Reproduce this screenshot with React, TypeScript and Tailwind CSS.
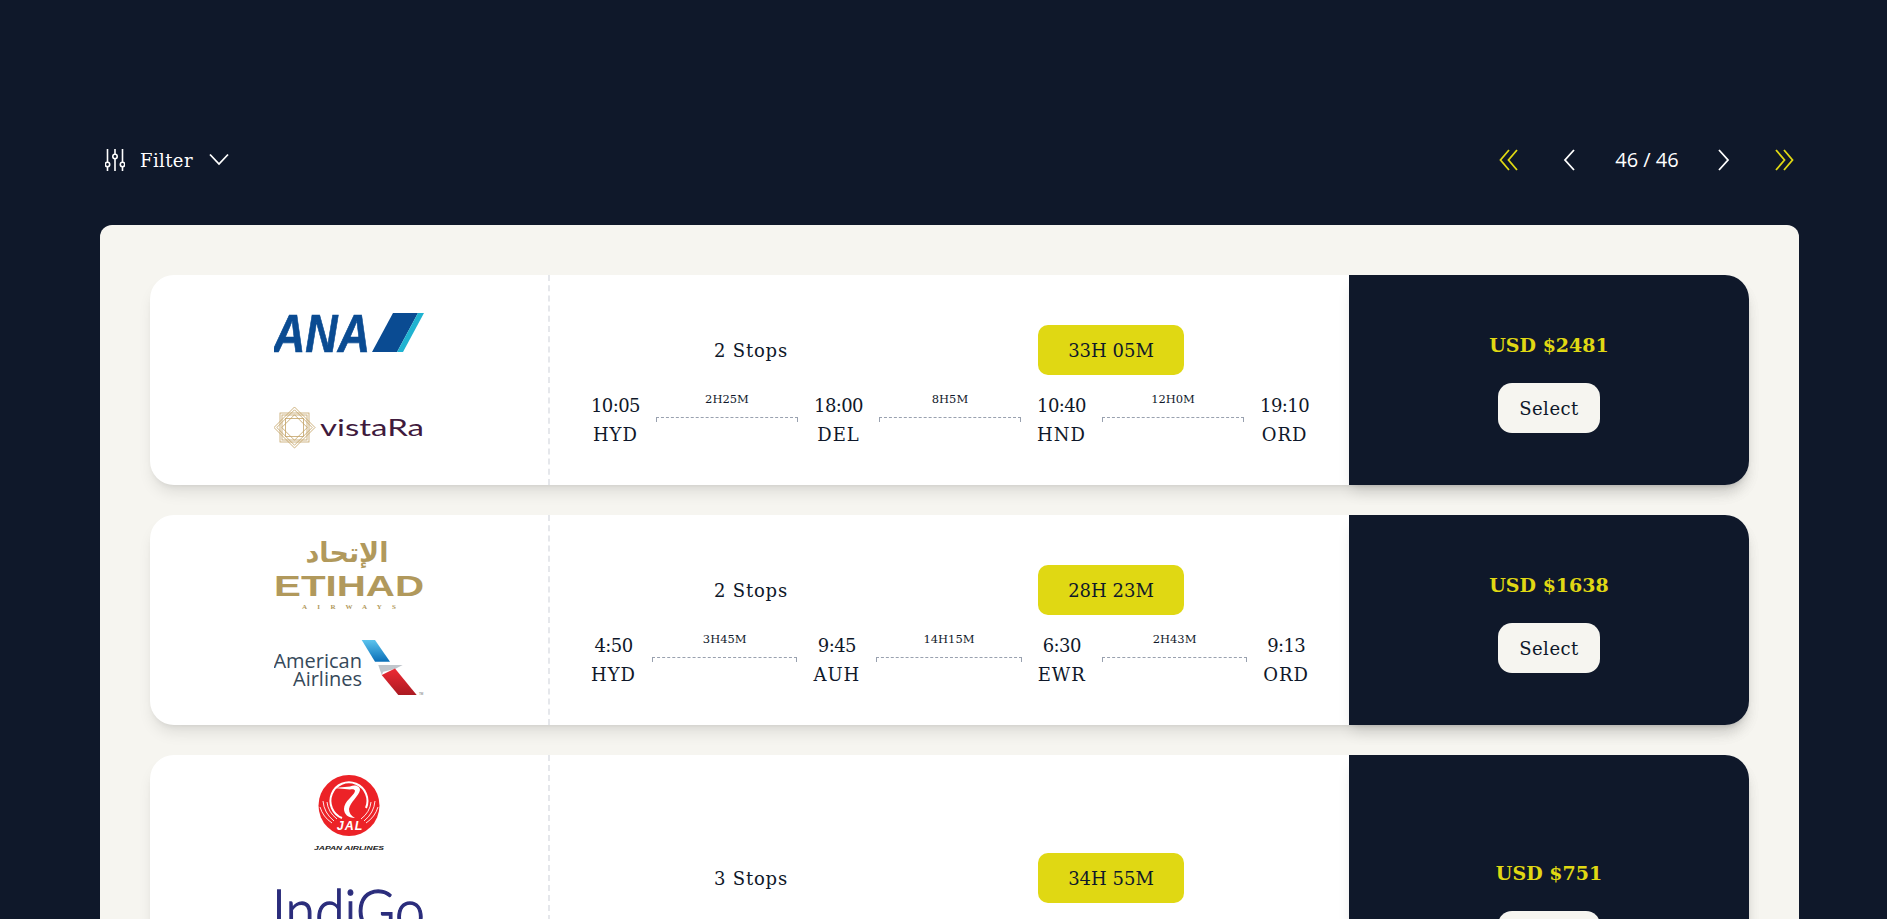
import React from "react";

const serif = "font-['DejaVu_Serif',serif]";

function Sliders() {
  return (
    <svg width="20" height="22" viewBox="0 0 20 22" fill="none" stroke="#fff" strokeWidth="1.6">
      <path d="M2.5 0v13M2.5 18v4M10 0v5M10 10v12M17.5 0v13M17.5 18v4" />
      <circle cx="2.5" cy="15.5" r="2.2" />
      <circle cx="10" cy="7.5" r="2.2" />
      <circle cx="17.5" cy="15.5" r="2.2" />
    </svg>
  );
}

function Chev({ d, w, color }: { d: string; w: number; color: string }) {
  return (
    <svg width={w} height="22" viewBox={`0 0 ${w} 22`} fill="none" stroke={color} strokeWidth="1.8">
      <path d={d} />
    </svg>
  );
}

function Ana() {
  return (
    <svg width="150" height="75" viewBox="0 0 150 75">
      <text x="-1" y="57" fontFamily="Liberation Sans" fontWeight="700" fontStyle="italic" fontSize="54" fill="#0a4b92" stroke="#0a4b92" strokeWidth="0.7" textLength="97" lengthAdjust="spacingAndGlyphs">ANA</text>
      <path d="M98 57 L119 18 H144 L123 57Z" fill="#0a4b92" />
      <path d="M123 57 L144 18 H150 L129 57Z" fill="#1fb3d1" />
    </svg>
  );
}

function Vistara() {
  return (
    <svg width="150" height="75" viewBox="0 0 150 75">
      <g transform="translate(20.5 37.5)" fill="none" stroke="#c4a468" strokeWidth="0.8">
        {[0, 45].map((r) => (
          <g key={r} transform={`rotate(${r})`}>
            <rect x="-14.5" y="-14.5" width="29" height="29" />
            <rect x="-12.5" y="-12.5" width="25" height="25" />
            <rect x="-9" y="-9" width="18" height="18" />
          </g>
        ))}
      </g>
      <text x="46" y="46" fontFamily="Lato" fontWeight="400" fontSize="23" fill="#3f1a3d" textLength="104" lengthAdjust="spacingAndGlyphs">vistaRa</text>
    </svg>
  );
}

function Etihad() {
  return (
    <svg width="150" height="75" viewBox="0 0 150 75">
      <text x="73" y="27" textAnchor="middle" fontFamily="DejaVu Sans" fontWeight="700" fontSize="27" fill="#b1995c" direction="rtl">الإتحاد</text>
      <text x="0" y="61" fontFamily="Liberation Sans" fontWeight="700" fontSize="29" fill="#b1995c" textLength="150" lengthAdjust="spacingAndGlyphs">ETIHAD</text>
      <text x="28" y="74" fontFamily="Liberation Serif" fontWeight="700" fontSize="7" fill="#b1995c" textLength="94" lengthAdjust="spacing">AIRWAYS</text>
    </svg>
  );
}

function American() {
  return (
    <svg width="150" height="75" viewBox="0 0 150 75">
      <defs>
        <linearGradient id="aaBlue" x1="0" y1="0" x2="0" y2="1">
          <stop offset="0" stopColor="#5cc4ee" />
          <stop offset="1" stopColor="#0a6fb8" />
        </linearGradient>
        <linearGradient id="aaRed" x1="0" y1="0" x2="0" y2="1">
          <stop offset="0" stopColor="#ee2a34" />
          <stop offset="1" stopColor="#ab1a22" />
        </linearGradient>
      </defs>
      <text x="88" y="38" textAnchor="end" fontFamily="Open Sans" fontWeight="500" fontSize="20" fill="#36495a">American</text>
      <text x="88" y="56" textAnchor="end" fontFamily="Open Sans" fontWeight="500" fontSize="20" fill="#36495a">Airlines</text>
      <path d="M87.7 10 H101 L116 31.7 H101Z" fill="url(#aaBlue)" />
      <path d="M104.3 35 H128.7 L121 39 L109.3 41.7 L107.7 45Z" fill="#c0c6cc" />
      <path d="M107.7 45 L121 38.5 L142.7 65 H124.3Z" fill="url(#aaRed)" />
      <text x="145" y="65" fontFamily="Liberation Sans" fontSize="3" fill="#666">TM</text>
    </svg>
  );
}

function Jal() {
  return (
    <svg width="150" height="76" viewBox="0 0 150 76">
      <circle cx="75" cy="30.5" r="30.5" fill="#ec2227" />
      <path d="M68 43 A18.5 18.5 0 1 1 92 33" fill="none" stroke="#fff" strokeWidth="2" />
      <path d="M60 13 L76 11.5 C81 9.5 86 11 86 15 C85 21 76 27 75 34 C75 38 77 41 81 43 C74 43 70 39 70 34 C70 26 80 21 81 16 C81 14.5 79 14 76 14.5Z" fill="#fff" />
      <path d="M49 26 Q50 38 60 46 M53 27 Q54 37 63 44 M46 32 Q49 42 58 48 M101 26 Q100 38 90 46 M97 27 Q96 37 87 44 M104 32 Q101 42 92 48" fill="none" stroke="#fff" strokeWidth="0.9" />
      <text x="76" y="54.5" textAnchor="middle" fontFamily="Liberation Sans" fontWeight="700" fontStyle="italic" fontSize="12.5" fill="#fff" letterSpacing="1">JAL</text>
      <text x="75" y="75" textAnchor="middle" fontFamily="Liberation Sans" fontWeight="700" fontStyle="italic" fontSize="6.2" fill="#222" textLength="70" lengthAdjust="spacingAndGlyphs">JAPAN AIRLINES</text>
    </svg>
  );
}

function Indigo() {
  return (
    <svg width="150" height="75" viewBox="0 0 150 75">
      <text x="-2" y="61" fontFamily="Lato" fontWeight="300" fontSize="60" fill="#2b2d7c" stroke="#2b2d7c" strokeWidth="1.3" textLength="153" lengthAdjust="spacingAndGlyphs">IndiGo</text>
    </svg>
  );
}

type Leg = { time: string; code: string; dur?: string };

function Stop({ time, code }: Leg) {
  return (
    <div className="flex flex-col items-center shrink-0 text-[18px] leading-[29px] text-[#0f182a]">
      <span className="tracking-[-0.6px]">{time}</span>
      <span className="tracking-[1px]">{code}</span>
    </div>
  );
}

function Legs({ legs }: { legs: Leg[] }) {
  return (
    <div className="flex gap-4 w-[718px] ml-[41px]">
      {legs.map((l, i) => (
        <React.Fragment key={l.code + i}>
          <Stop {...l} />
          {l.dur && (
            <div className="flex-1 flex flex-col items-center">
              <span className="text-[11.5px] leading-4 h-4 text-[#0f182a]">{l.dur}</span>
              <div className="w-full h-[5px] mt-[10px] border-t border-x border-dashed border-gray-400" />
            </div>
          )}
        </React.Fragment>
      ))}
    </div>
  );
}

function Card({
  top,
  bottom,
  stops,
  total,
  price,
  legs,
  cardClass,
  midClass,
}: {
  top: React.ReactNode;
  bottom: React.ReactNode;
  stops: string;
  total: string;
  price: string;
  legs?: Leg[];
  cardClass: string;
  midClass: string;
}) {
  return (
    <div className={`flex w-[1599px] rounded-3xl bg-white shadow-lg ${cardClass}`}>
      <div className="w-[400px] shrink-0 flex flex-col items-center pt-5 gap-5 border-r-2 border-dashed border-gray-200">
        <div>{top}</div>
        <div>{bottom}</div>
      </div>
      <div className={`flex-1 flex flex-col gap-4 ${midClass}`}>
        <div className="flex w-[720px] ml-[21px]">
          <div className="w-[360px] flex items-center justify-center text-[18px] text-[#0f182a] tracking-[0.8px]">{stops}</div>
          <div className="w-[360px] flex justify-center">
            <div className="w-[146px] h-[50px] rounded-[10px] bg-[#e0d813] flex items-center justify-center text-[18px] text-[#0f182a]">{total}</div>
          </div>
        </div>
        {legs && <Legs legs={legs} />}
      </div>
      <div className="w-[400px] shrink-0 rounded-r-3xl bg-[#0f182a] shadow-lg flex flex-col items-center justify-center pt-[2px]">
        <div className="text-[19px] leading-8 font-bold text-[#e0d813] mb-[22px]">{price}</div>
        <button className="w-[102px] h-[50px] rounded-[14px] bg-[#f6f5f0] text-[18px] text-[#0f182a] tracking-[0.5px]">Select</button>
      </div>
    </div>
  );
}

export default function App() {
  return (
    <div className={`h-[919px] overflow-hidden bg-[#0f182a] pl-[100px] pr-[88px] pt-[145px] ${serif}`}>
      <div className="h-[30px] mb-[50px] flex items-center justify-between text-white">
        <div className="flex items-center pl-[5px]">
          <Sliders />
          <span className="ml-[15px] text-[18px] tracking-[0.4px]">Filter</span>
          <span className="ml-4 flex">
            <Chev w={20} d="M1 5.5 L10 15 L19 5.5" color="#fff" />
          </span>
        </div>
        <div className="flex items-center pr-[5px]">
          <Chev w={19} d="M10 1 L1.5 11 L10 21 M18 1 L9.5 11 L18 21" color="#e0d813" />
          <span className="ml-[45px] flex"><Chev w={12} d="M11 1 L2 11 L11 21" color="#fff" /></span>
          <span className="ml-10 w-[64px] text-center font-['Open_Sans',sans-serif] text-[20px]">46 / 46</span>
          <span className="ml-[39px] flex"><Chev w={12} d="M1 1 L10 11 L1 21" color="#fff" /></span>
          <span className="ml-[45px] flex"><Chev w={19} d="M1 1 L9.5 11 L1 21 M9 1 L17.5 11 L9 21" color="#e0d813" /></span>
        </div>
      </div>
      <div className="rounded-xl bg-[#f6f5f0] p-[50px] flex flex-col gap-[30px]">
        <Card
          cardClass="h-[210px]"
          midClass="pt-[50px]"
          top={<Ana />}
          bottom={<Vistara />}
          stops="2 Stops"
          total="33H 05M"
          price="USD $2481"
          legs={[
            { time: "10:05", code: "HYD", dur: "2H25M" },
            { time: "18:00", code: "DEL", dur: "8H5M" },
            { time: "10:40", code: "HND", dur: "12H0M" },
            { time: "19:10", code: "ORD" },
          ]}
        />
        <Card
          cardClass="h-[210px]"
          midClass="pt-[50px]"
          top={<Etihad />}
          bottom={<American />}
          stops="2 Stops"
          total="28H 23M"
          price="USD $1638"
          legs={[
            { time: "4:50", code: "HYD", dur: "3H45M" },
            { time: "9:45", code: "AUH", dur: "14H15M" },
            { time: "6:30", code: "EWR", dur: "2H43M" },
            { time: "9:13", code: "ORD" },
          ]}
        />
        <Card
          cardClass="h-[306px]"
          midClass="pt-[98px]"
          top={<Jal />}
          bottom={<Indigo />}
          stops="3 Stops"
          total="34H 55M"
          price="USD $751"
        />
      </div>
    </div>
  );
}
